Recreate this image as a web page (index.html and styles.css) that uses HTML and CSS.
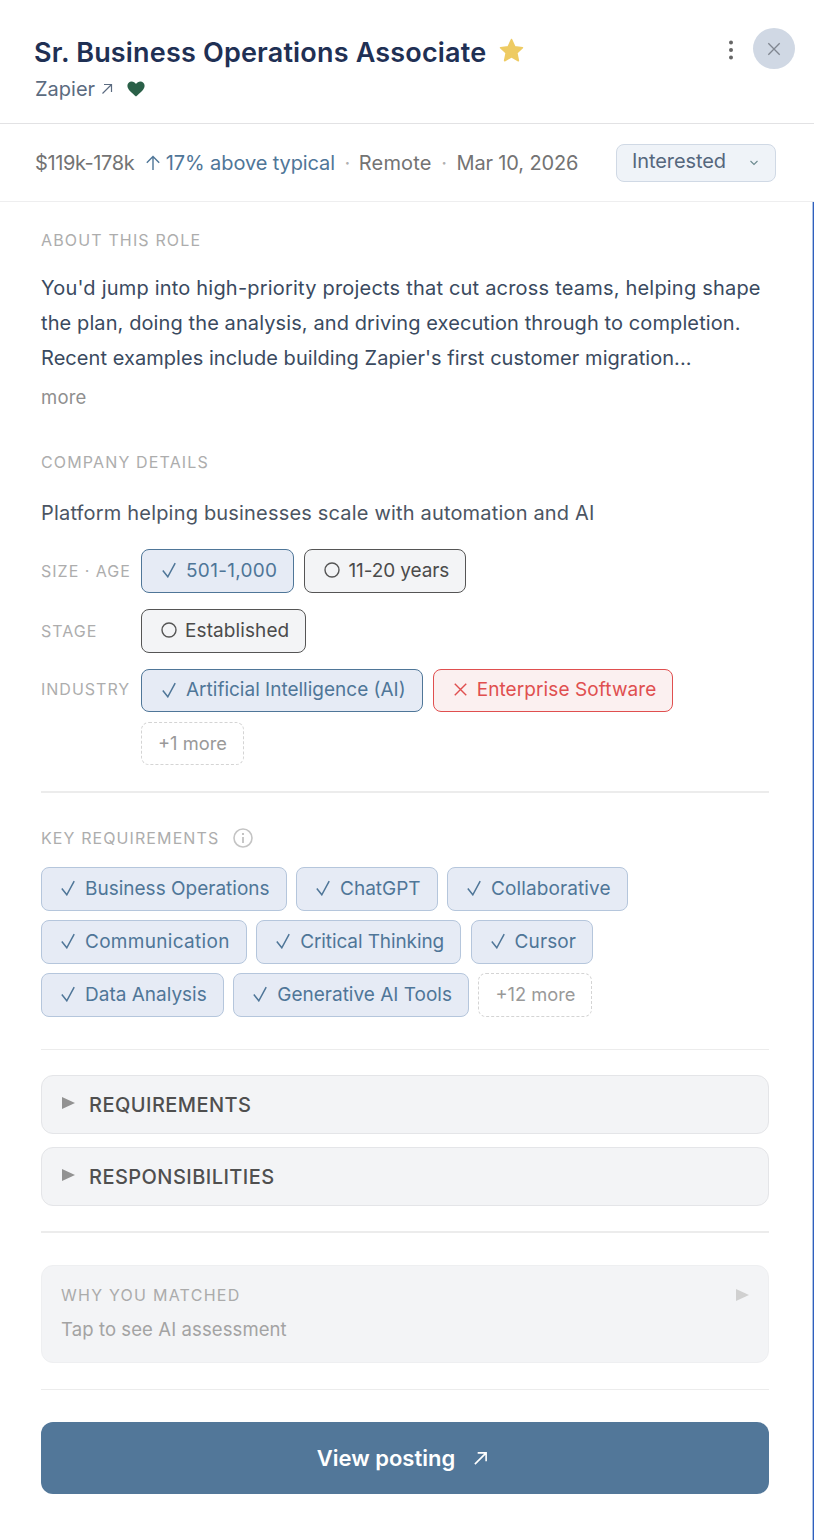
FILE: index.html
```html
<!DOCTYPE html>
<html lang="en">
<head>
<meta charset="utf-8">
<title>Sr. Business Operations Associate</title>
<link rel="stylesheet" href="styles.css">
</head>
<body>
<svg class="defs" aria-hidden="true"><defs><symbol id="check" viewBox="0 0 14 16"><path d="M.8 8.500L5.800 14.800 13.200 1.200" fill="none" stroke="currentColor" stroke-width="1.500"/></symbol></defs></svg>
<div class="panel">
  <header class="head">
    <div class="head-main">
      <div class="title-row">
        <h1 class="title">Sr. Business Operations Associate</h1>
        <svg class="star" viewBox="0 0 24 24"><path d="M12 1.500l3.200 6.900 7.300.9-5.400 5 1.500 7.500L12 18.100 5.400 21.800l1.500-7.500-5.400-5 7.300-.9z" fill="#eecb63" stroke="#eecb63" stroke-width="1.500" stroke-linejoin="round"/></svg>
      </div>
      <div class="company-row">
        <span class="company">Zapier</span>
        <svg class="co-arrow" viewBox="0 0 12 12"><path d="M1.500 10.500L10.500 1.500M3 1.500H10.500V9" fill="none" stroke="#5b6b80" stroke-width="1.200"/></svg>
        <svg class="heart" viewBox="0 0 18 16"><path d="M9 15.500C5 12 .4 8.800.4 4.800.4 2.300 2.400.6 4.600.6 6.400.6 8 1.500 9 3c1-1.500 2.600-2.400 4.400-2.400 2.200 0 4.200 1.700 4.200 4.200 0 4-4.600 7.200-8.600 10.700z" fill="#2a6048"/></svg>
      </div>
    </div>
    <div class="head-actions">
      <svg class="dots" viewBox="0 0 6 22"><circle cx="3" cy="3.500" r="2" fill="#666"/><circle cx="3" cy="11" r="2" fill="#666"/><circle cx="3" cy="18.500" r="2" fill="#666"/></svg>
      <button class="close"><svg viewBox="0 0 16 16"><path d="M1.500 1.500l13 13M14.500 1.500l-13 13" stroke="#808690" stroke-width="1.500" fill="none"/></svg></button>
    </div>
  </header>
  <div class="meta">
    <span class="salary">$119k-178k</span>
    <span class="above"><svg class="up" viewBox="0 0 16 16"><path d="M8 15V1.500M1.800 7.700L8 1.500l6.200 6.200" fill="none" stroke="#4f7698" stroke-width="1.400"/></svg>17% above typical</span>
    <span class="sep">·</span><span class="remote">Remote</span><span class="sep">·</span><span class="date">Mar 10, 2026</span>
    <div class="status"><span class="status-text">Interested</span><svg class="chev" viewBox="0 0 10 6"><path d="M1.500 1l3.500 3.500L8.500 1" fill="none" stroke="#6b8a8f" stroke-width="1.100"/></svg></div>
  </div>
  <main class="body">
    <div class="label label-about">ABOUT THIS ROLE</div>
    <p class="para"><span class="ln ln-1">You'd jump into high-priority projects that cut across teams, helping shape</span><span class="ln ln-2">the plan, doing the analysis, and driving execution through to completion.</span><span class="ln ln-3">Recent examples include building Zapier's first customer migration...</span></p>
    <div class="more-link">more</div>
    <div class="label label-company">COMPANY DETAILS</div>
    <p class="tagline">Platform helping businesses scale with automation and AI</p>
    <div class="attr"><span class="attr-name">SIZE · AGE</span><div class="chips">
      <span class="chip match ls-3"><svg class="mk"><use href="#check"/></svg>501-1,000</span>
      <span class="chip neutral ls-n"><svg class="ring" viewBox="0 0 16 16"><circle cx="8" cy="8" r="7" fill="none" stroke="#555" stroke-width="1.400"/></svg>11-20 years</span>
    </div></div>
    <div class="attr"><span class="attr-name">STAGE</span><div class="chips">
      <span class="chip neutral ls-1"><svg class="ring" viewBox="0 0 16 16"><circle cx="8" cy="8" r="7" fill="none" stroke="#555" stroke-width="1.400"/></svg>Established</span>
    </div></div>
    <div class="attr attr-last"><span class="attr-name">INDUSTRY</span><div class="chips">
      <span class="chip match"><svg class="mk"><use href="#check"/></svg>Artificial Intelligence (AI)</span>
      <span class="chip miss ls-1"><svg class="xm" viewBox="0 0 12 12"><path d="M.7.7l10.600 10.600M11.300.7L.7 11.300" fill="none" stroke="#e04f4f" stroke-width="1.300"/></svg>Enterprise Software</span>
      <span class="chip more-chip">+1 more</span>
    </div></div>
    <hr class="rule rule-2 r1">
    <div class="label keyreq">KEY REQUIREMENTS <svg class="info" viewBox="0 0 20 20"><circle cx="10" cy="10" r="9" fill="none" stroke="#c4c4c4" stroke-width="1.600"/><circle cx="10" cy="6" r="1.100" fill="#b5b5b5"/><path d="M10 9v6" stroke="#b5b5b5" stroke-width="1.500"/></svg></div>
    <div class="reqs">
      <span class="chip req"><svg class="mk"><use href="#check"/></svg>Business Operations</span>
      <span class="chip req"><svg class="mk"><use href="#check"/></svg>ChatGPT</span>
      <span class="chip req ls-1"><svg class="mk"><use href="#check"/></svg>Collaborative</span>
      <span class="chip req ls-3"><svg class="mk"><use href="#check"/></svg>Communication</span>
      <span class="chip req ls-n"><svg class="mk"><use href="#check"/></svg>Critical Thinking</span>
      <span class="chip req ls-1"><svg class="mk"><use href="#check"/></svg>Cursor</span>
      <span class="chip req"><svg class="mk"><use href="#check"/></svg>Data Analysis</span>
      <span class="chip req"><svg class="mk"><use href="#check"/></svg>Generative AI Tools</span>
      <span class="chip more-chip">+12 more</span>
    </div>
    <hr class="rule r2">
    <div class="acc"><span class="tri"></span>REQUIREMENTS</div>
    <div class="acc acc-2"><span class="tri"></span>RESPONSIBILITIES</div>
    <hr class="rule rule-2 r3">
    <div class="why">
      <div class="why-top"><span class="why-label">WHY YOU MATCHED</span><span class="tri tri-light"></span></div>
      <div class="why-sub">Tap to see AI assessment</div>
    </div>
    <hr class="rule r4">
    <button class="cta">View posting<svg class="cta-arrow" viewBox="0 0 16 16"><path d="M2 14L14 2M5 2h9v9" fill="none" stroke="#fff" stroke-width="1.700"/></svg></button>
  </main>
</div>
</body>
</html>
```
FILE: styles.css
```css
* { box-sizing: border-box; }
html, body { margin: 0; padding: 0; background: #fff; }
body { font-family: "Inter", "Liberation Sans", sans-serif; color: #3d4a5c; }
.defs { display: none; }
.panel { width: 814px; height: 1540px; overflow: hidden; display: flex; flex-direction: column; }
.head { height: 124px; border-bottom: 1px solid #e2e2e4; padding: 29px 19px 0 35px; display: flex; justify-content: space-between; }
.title-row { display: flex; align-items: center; gap: 13px; height: 46px; }
.title { margin: 0 0 0 -1px; font-size: 27px; font-weight: 600; color: #1f3054; letter-spacing: .18px; white-space: nowrap; }
.star { width: 25px; height: 25px; margin-top: -4px; }
.company-row { display: flex; align-items: center; height: 24px; margin-top: 2px; }
.company { font-size: 20px; color: #5b6b80; }
.co-arrow { width: 12px; height: 12px; margin-left: 6px; }
.heart { width: 18px; height: 16px; margin-left: 14px; }
.head-actions { display: flex; align-items: flex-start; gap: 19px; margin-top: -1px; }
.dots { width: 6px; height: 22px; margin-top: 11px; }
.close { width: 42px; height: 41px; border-radius: 50%; border: 0; background: #d0d8e4; padding: 0; display: flex; align-items: center; justify-content: center; }
.close svg { width: 14px; height: 14px; }
.meta { height: 78px; border-bottom: 1px solid #eeeeef; padding: 0 38px 0 35px; display: flex; align-items: center; gap: 9.500px; font-size: 20px; color: #737373; }
.salary { letter-spacing: -.4px; margin-right: 1px; }
.above { color: #4f7698; display: flex; align-items: center; gap: 5px; letter-spacing: -.1px; }
.remote { letter-spacing: .2px; margin-left: -1px; }
.date { letter-spacing: -.15px; }
.up { width: 16px; height: 16px; }
.sep { color: #b0b0b0; }
.status { margin-left: auto; width: 160px; height: 38px; border: 1px solid #d0d9e5; border-radius: 8px; background: #eff3f8; display: flex; align-items: center; justify-content: space-between; padding: 0 16px 0 15px; color: #55677d; }
.status-text { margin-top: -3px; letter-spacing: -.1px; }
.chev { width: 10px; height: 6px; }
.body { flex: 1; padding: 0 44px 0 41px; border-right: 1px solid #2f5fbe; box-shadow: inset -1px 0 0 #aec3e4; }
.label { font-size: 16px; letter-spacing: 1.150px; color: #adadad; line-height: 20px; }
.label-about { margin-top: 28px; }
.para { margin: 21px 0 0; font-size: 20px; line-height: 35px; color: #3a4a60; white-space: nowrap; }
.ln { display: block; }
.ln-1 { letter-spacing: .2px; }
.ln-2 { letter-spacing: .1px; }
.ln-3 { letter-spacing: .05px; }
.more-link { margin-top: 9px; font-size: 18.500px; letter-spacing: .2px; line-height: 24px; color: #8f8f8f; }
.label-company { margin-top: 43px; }
.tagline { margin: 25px 0 0; font-size: 20px; line-height: 32px; letter-spacing: .18px; color: #4b5563; }
.attr { display: flex; margin-top: 16px; }
.tagline + .attr { margin-top: 20px; }
.attr-name { width: 100px; flex: none; font-size: 16px; letter-spacing: 1px; color: #adadad; line-height: 44px; white-space: nowrap; }
.attr-last .attr-name { line-height: 41px; }
.chips { display: flex; flex-wrap: wrap; gap: 10px; }
.chip { display: inline-flex; align-items: center; height: 44px; border: 1px solid; border-radius: 8px; padding: 0 16px 2px 20px; font-size: 19px; white-space: nowrap; }
.ls-1 { letter-spacing: .1px; }
.ls-3 { letter-spacing: .3px; }
.ls-n { letter-spacing: -.1px; }
.mk { width: 14px; height: 16px; margin-right: 10px; flex: none; }
.ring { width: 16px; height: 16px; margin-right: 8px; margin-left: -1px; }
.xm { width: 13px; height: 13px; margin-right: 10px; }
.match { background: #e6ebf5; border-color: #4f7698; color: #4f7698; }
.neutral { background: #f3f4f6; border-color: #555; color: #4b4b4b; }
.miss { background: #fbf0f0; border-color: #e04f4f; color: #e04f4f; }
.chip.more-chip { border: 1px dashed #d4d4d4; color: #999; background: #fff; padding: 0 16px 2px; font-size: 18.300px; }
.attr-last .chip { height: 43px; }
.rule { border: 0; margin: 0; height: 1px; background: #ececec; }
.rule-2 { height: 2px; }
.r1 { margin-top: 26px; }
.keyreq { margin-top: 35px; display: flex; align-items: center; gap: 14px; letter-spacing: 1.100px; }
.info { width: 20px; height: 20px; }
.reqs { display: flex; flex-wrap: wrap; gap: 9px 9.500px; margin-top: 19px; }
.req { background: #e6ebf5; border-color: #b5c6dc; color: #4f7698; }
.chip.req { padding-right: 16px; padding-left: 19px; }
.r2 { margin-top: 32px; }
.acc { margin-top: 25px; height: 59px; border: 1px solid #e4e5e8; border-radius: 12px; background: #f3f4f6; display: flex; align-items: center; padding-left: 20px; font-size: 20px; font-weight: 500; color: #4f4f4f; letter-spacing: .45px; }
.acc-2 { margin-top: 13px; }
.tri { display: inline-block; width: 0; height: 0; border-left: 13px solid #929292; border-top: 6.500px solid transparent; border-bottom: 6.500px solid transparent; margin-right: 14px; margin-top: -3px; }
.r3 { margin-top: 25px; }
.why { margin-top: 32px; height: 98px; border: 1px solid #eeeff1; border-radius: 12px; background: #f3f4f6; padding: 19px 19px 0; }
.why-top { display: flex; justify-content: space-between; align-items: center; height: 20px; }
.why-label { font-size: 16px; letter-spacing: 1.250px; color: #ababab; }
.tri-light { border-left-color: #d0d0d0; margin-right: 0; margin-top: 0; }
.why-sub { margin-top: 11px; font-size: 18.500px; letter-spacing: .1px; color: #a3a3a3; line-height: 26px; }
.r4 { margin-top: 26px; }
.cta { margin-top: 32px; width: 100%; height: 72px; border: 0; border-radius: 12px; background: #527799; color: #fff; font-family: inherit; font-size: 22px; font-weight: 600; display: flex; align-items: center; justify-content: center; gap: 18px; padding: 0 5px 0 0; }
.cta-arrow { width: 15px; height: 15px; }
```
